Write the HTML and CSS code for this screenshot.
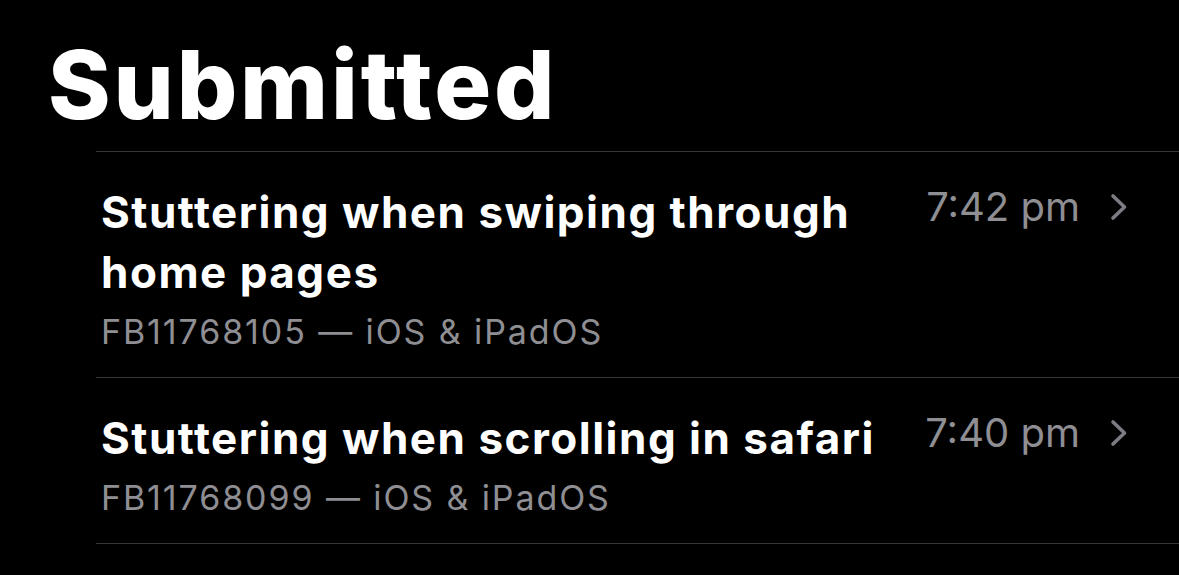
FILE: index.html
```html
<!DOCTYPE html>
<html lang="en">
<head>
    <meta charset="UTF-8">
    <meta name="viewport" content="width=device-width, initial-scale=1.0">
    <title>Submitted</title>
    <link rel="stylesheet" href="styles.css">
</head>
<body>
    <h1 class="page-title">Submitted</h1>

    <ul class="feedback-list">
        <li class="feedback-row">
            <div class="feedback-text">
                <div class="feedback-title">Stuttering when swiping through home pages</div>
                <div class="feedback-sub">FB11768105 — iOS &amp; iPadOS</div>
            </div>
            <div class="feedback-meta">
                <span class="feedback-time">7:42 pm</span>
                <svg class="chevron" width="18" height="30" viewBox="0 0 18 30">
                    <path d="M3 4 L14.5 15 L3 26" fill="none" stroke="#7c7c82" stroke-width="3.6" stroke-linecap="round" stroke-linejoin="round"/>
                </svg>
            </div>
        </li>
        <li class="feedback-row">
            <div class="feedback-text">
                <div class="feedback-title">Stuttering when scrolling in safari</div>
                <div class="feedback-sub">FB11768099 — iOS &amp; iPadOS</div>
            </div>
            <div class="feedback-meta">
                <span class="feedback-time">7:40 pm</span>
                <svg class="chevron" width="18" height="30" viewBox="0 0 18 30">
                    <path d="M3 4 L14.5 15 L3 26" fill="none" stroke="#7c7c82" stroke-width="3.6" stroke-linecap="round" stroke-linejoin="round"/>
                </svg>
            </div>
        </li>
    </ul>
</body>
</html>
```

FILE: styles.css
```css
body {
    margin: 0;
    padding: 37px 0 0 0;
    background-color: #000;
    color: #fff;
    font-family: 'Inter', 'Noto Sans', sans-serif;
}
.page-title {
    margin: 0 0 0 48px;
    font-size: 95px;
    line-height: 95px;
    font-weight: 800;
    letter-spacing: 2.8px;
}
.feedback-list {
    list-style: none;
    margin: 19px 0 0 96px;
    padding: 0;
    border-top: 1px solid #38383a;
}
.feedback-row {
    display: flex;
    align-items: flex-start;
    padding: 30px 51px 23px 5px;
    border-bottom: 1px solid #38383a;
}
.feedback-text {
    flex: 1;
    min-width: 0;
    padding-right: 20px;
}
.feedback-title {
    font-size: 44px;
    line-height: 60px;
    font-weight: 700;
    letter-spacing: 1.5px;
}
.feedback-sub {
    margin-top: 8px;
    font-size: 34px;
    line-height: 44px;
    letter-spacing: 1.9px;
    color: #8e8e93;
}
.feedback-meta {
    display: flex;
    align-items: center;
    gap: 30px;
}
.feedback-time {
    font-size: 40px;
    line-height: 50px;
    color: #8e8e93;
}
.chevron {
    display: block;
}
```
